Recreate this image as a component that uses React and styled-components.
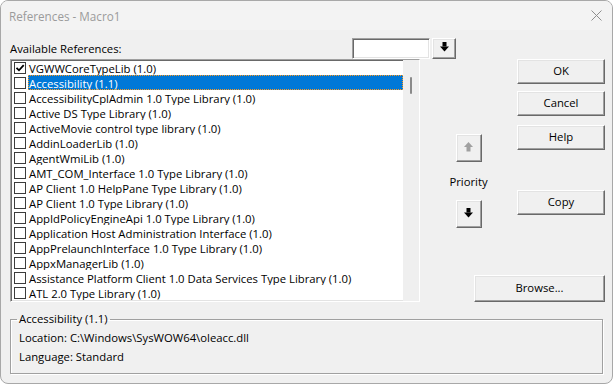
import React from 'react'
import styled, { createGlobalStyle } from 'styled-components'

const GlobalStyle = createGlobalStyle`
  html, body {
    margin: 0;
    padding: 0;
    background: #ffffff;
  }
  body {
    font-family: 'Open Sans', 'Liberation Sans', sans-serif;
    font-size: 11.3px;
    color: #000;
  }
`

const Window = styled.div`
  box-sizing: border-box;
  width: 613px;
  height: 384px;
  border: 1px solid #a8a8a8;
  border-radius: 8px;
  background: #f0f0f0;
  overflow: hidden;
  display: flex;
  flex-direction: column;
`
const TitleBar = styled.div`
  height: 29px;
  display: flex;
  align-items: center;
  justify-content: space-between;
  padding: 0 10px 0 8px;
  background: #f3f3f3;
  color: #9b9b9b;
  font-size: 11.7px;
`
const Body = styled.div`
  padding: 7px 8px 0 9px;
  display: flex;
  flex-direction: column;
`
const MainGrid = styled.div`
  display: grid;
  grid-template-columns: 410px 97px 88px;
  grid-template-rows: 22px 216px 27px;
`
const Header = styled.div`
  grid-column: 1 / 3;
  display: flex;
  align-items: center;
  justify-content: space-between;
  padding-right: 61px;
`
const ComboGroup = styled.div`
  display: flex;
  gap: 2px;
  height: 21px;
`
const Sunken = styled.div`
  box-sizing: border-box;
  border-style: solid;
  border-width: 1px;
  border-color: #a0a0a0 #ffffff #ffffff #a0a0a0;
  box-shadow: inset 1px 1px 0 #696969, inset -1px -1px 0 #e3e3e3;
  background: #ffffff;
`
const ComboBox = styled(Sunken)`
  width: 78px;
  height: 21px;
`
const Button = styled.div`
  box-sizing: border-box;
  width: ${p => p.$w || 88}px;
  height: ${p => p.$h || 25}px;
  display: flex;
  align-items: center;
  justify-content: center;
  padding-bottom: 2px;
  border-style: solid;
  border-width: 1px;
  border-color: #ffffff #696969 #696969 #ffffff;
  box-shadow: inset -1px -1px 0 #a0a0a0, inset 1px 1px 0 #e3e3e3;
  background: #f0f0f0;
  color: #000;
`
const ListBox = styled(Sunken)`
  grid-row: 2 / 4;
  grid-column: 1;
  display: flex;
  overflow: hidden;
`
const Items = styled.div`
  flex: 1;
  display: flex;
  flex-direction: column;
`
const Row = styled.div`
  height: 15px;
  flex-shrink: 0;
  display: flex;
  align-items: center;
  padding-left: 3px;
`
const CheckBox = styled.div`
  box-sizing: border-box;
  width: 12px;
  height: 12px;
  border: 1px solid #3c3c3c;
  background: #ffffff;
  display: flex;
  align-items: center;
  justify-content: center;
  margin-right: 2px;
`
const ItemLabel = styled.div`
  flex: 1;
  height: 15px;
  box-sizing: border-box;
  line-height: 17px;
  padding-left: 1px;
  white-space: nowrap;
  overflow: hidden;
  background: ${p => (p.$selected ? '#0078d7' : 'transparent')};
  color: ${p => (p.$selected ? '#ffffff' : '#000000')};
  outline: ${p => (p.$selected ? '1px dotted #ff9a1f' : 'none')};
  outline-offset: -1px;
`
const ScrollTrack = styled.div`
  width: 16px;
  background: #efefef;
  display: flex;
  justify-content: center;
  padding-top: 17px;
`
const Thumb = styled.div`
  width: 2px;
  height: 17px;
  background: #8a8a8a;
  border-radius: 1px;
`
const PriorityColumn = styled.div`
  grid-row: 2;
  grid-column: 2;
  display: flex;
  flex-direction: column;
  align-items: center;
  padding-top: 75px;
`
const PriorityLabel = styled.div`
  height: 38px;
  display: flex;
  align-items: center;
`
const ActionColumn = styled.div`
  grid-row: 2;
  grid-column: 3;
  display: flex;
  flex-direction: column;
`
const Spaced = styled.div`
  margin-top: ${p => p.$top}px;
`
const BrowseCell = styled.div`
  grid-row: 3;
  grid-column: 2 / 4;
  justify-self: end;
`
const GroupBox = styled.fieldset`
  margin: 10px 1px 0 0;
  padding: 2px 8px 7px 8px;
  border: 1px solid #a0a0a0;
  box-shadow: inset 1px 1px 0 #ffffff, 1px 1px 0 #ffffff;
  min-width: 0;
`
const Caption = styled.legend`
  padding: 0 2px;
  margin-left: -2px;
  line-height: 14px;
`
const InfoLine = styled.div`
  line-height: 19px;
`

const DownArrow = ({ color = '#000' }) => (
  <svg width='9' height='10' viewBox='0 0 9 10'>
    <rect x='2.5' y='0' width='4' height='4.5' fill={color} />
    <polygon points='0,4.5 9,4.5 4.5,9.5' fill={color} />
  </svg>
)
const UpArrow = ({ color = '#000' }) => (
  <svg width='9' height='10' viewBox='0 0 9 10'>
    <polygon points='0,5 9,5 4.5,0' fill={color} />
    <rect x='2.5' y='5' width='4' height='4.5' fill={color} />
  </svg>
)
const CloseIcon = () => (
  <svg width='11' height='11' viewBox='0 0 11 11'>
    <path d='M0.5 0.5 L10.5 10.5 M10.5 0.5 L0.5 10.5' stroke='#8e8e8e' strokeWidth='1' fill='none' />
  </svg>
)
const Tick = () => (
  <svg width='10' height='10' viewBox='0 0 10 10'>
    <path d='M1.5 4.8 L4 7.3 L8.7 2.2' stroke='#000' strokeWidth='1.8' fill='none' />
  </svg>
)

const references = [
  { name: 'VGWWCoreTypeLib (1.0)', checked: true },
  { name: 'Accessibility (1.1)', selected: true },
  { name: 'AccessibilityCplAdmin 1.0 Type Library (1.0)' },
  { name: 'Active DS Type Library (1.0)' },
  { name: 'ActiveMovie control type library (1.0)' },
  { name: 'AddinLoaderLib (1.0)' },
  { name: 'AgentWmiLib (1.0)' },
  { name: 'AMT_COM_Interface 1.0 Type Library (1.0)' },
  { name: 'AP Client 1.0 HelpPane Type Library (1.0)' },
  { name: 'AP Client 1.0 Type Library (1.0)' },
  { name: 'AppIdPolicyEngineApi 1.0 Type Library (1.0)' },
  { name: 'Application Host Administration Interface (1.0)' },
  { name: 'AppPrelaunchInterface 1.0 Type Library (1.0)' },
  { name: 'AppxManagerLib (1.0)' },
  { name: 'Assistance Platform Client 1.0 Data Services Type Library (1.0)' },
  { name: 'ATL 2.0 Type Library (1.0)' }
]

const App = () => (
  <>
    <GlobalStyle />
    <Window>
      <TitleBar>
        <span>References - Macro1</span>
        <CloseIcon />
      </TitleBar>
      <Body>
        <MainGrid>
          <Header>
            <span>Available References:</span>
            <ComboGroup>
              <ComboBox />
              <Button $w={24} $h={21}><DownArrow /></Button>
            </ComboGroup>
          </Header>
          <ListBox>
            <Items>
              {references.map(ref => (
                <Row key={ref.name}>
                  <CheckBox>{ref.checked && <Tick />}</CheckBox>
                  <ItemLabel $selected={ref.selected}>{ref.name}</ItemLabel>
                </Row>
              ))}
            </Items>
            <ScrollTrack><Thumb /></ScrollTrack>
          </ListBox>
          <PriorityColumn>
            <Button $w={26} $h={28}><UpArrow color='#a0a0a0' /></Button>
            <PriorityLabel>Priority</PriorityLabel>
            <Button $w={26} $h={28}><DownArrow /></Button>
          </PriorityColumn>
          <ActionColumn>
            <Button>OK</Button>
            <Spaced $top={7}><Button>Cancel</Button></Spaced>
            <Spaced $top={9}><Button>Help</Button></Spaced>
            <Spaced $top={40}><Button>Copy</Button></Spaced>
          </ActionColumn>
          <BrowseCell>
            <Button $w={131} $h={27}>Browse...</Button>
          </BrowseCell>
        </MainGrid>
        <GroupBox>
          <Caption>Accessibility (1.1)</Caption>
          <InfoLine>Location: C:\Windows\SysWOW64\oleacc.dll</InfoLine>
          <InfoLine>Language: Standard</InfoLine>
        </GroupBox>
      </Body>
    </Window>
  </>
)

export default App
